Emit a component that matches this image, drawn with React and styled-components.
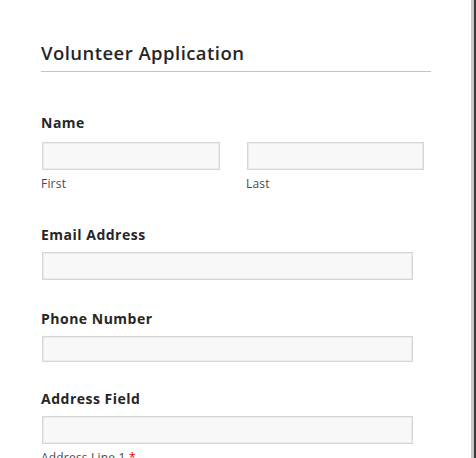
import React from "react";
import styled, { createGlobalStyle } from "styled-components";

const Global = createGlobalStyle`
  html, body { margin: 0; padding: 0; background: #fff; }
  body { font-family: "Open Sans", "Noto Sans", Arial, sans-serif; }
`;

const Page = styled.div`
  box-sizing: border-box;
  width: 476px;
  height: 458px;
  overflow: hidden;
  border-right: 2px solid #3a3a3a;
  box-shadow: inset -3px 0 0 #c8c8c8;
  padding: 40px 0 0 41px;
`;

const Title = styled.h1`
  margin: 0;
  width: 390px;
  font-size: 18.5px;
  font-weight: 600;
  line-height: 26px;
  letter-spacing: 0.45px;
  color: #262626;
  padding-bottom: 5px;
  border-bottom: 1px solid #c4c4c4;
`;

const Field = styled.div`
  display: flex;
  flex-direction: column;
  margin-top: ${(p) => p.$mt}px;
`;

const Label = styled.div`
  font-size: 14px;
  font-weight: 700;
  line-height: 18px;
  letter-spacing: 0.5px;
  color: #262626;
  margin-bottom: ${(p) => p.$gap || 8}px;
`;

const Row = styled.div`
  display: flex;
  gap: 26px;
`;

const Col = styled.div`
  display: flex;
  flex-direction: column;
`;

const Input = styled.div`
  box-sizing: border-box;
  width: ${(p) => p.$w}px;
  height: ${(p) => p.$h || 28}px;
  margin-left: 1px;
  background: #f8f8f8;
  border: 1px solid #d6d6d6;
  box-shadow: inset 0 0 0 1px #ebebeb;
`;

const Sub = styled.div`
  font-size: 12px;
  line-height: 15px;
  letter-spacing: 0.2px;
  color: #4a4a4a;
  margin-top: 6px;
`;

const Req = styled.span`
  color: #e00;
`;

export default function App() {
  return (
    <>
      <Global />
      <Page>
        <Title>Volunteer Application</Title>
        <Field $mt={42}>
          <Label $gap={10}>Name</Label>
          <Row>
            <Col>
              <Input $w={178} />
              <Sub>First</Sub>
            </Col>
            <Col>
              <Input $w={177} />
              <Sub>Last</Sub>
            </Col>
          </Row>
        </Field>
        <Field $mt={35}>
          <Label>Email Address</Label>
          <Input $w={371} />
        </Field>
        <Field $mt={30}>
          <Label>Phone Number</Label>
          <Input $w={371} $h={26} />
        </Field>
        <Field $mt={28}>
          <Label>Address Field</Label>
          <Input $w={371} />
          <Sub>
            Address Line 1 <Req>*</Req>
          </Sub>
        </Field>
      </Page>
    </>
  );
}
